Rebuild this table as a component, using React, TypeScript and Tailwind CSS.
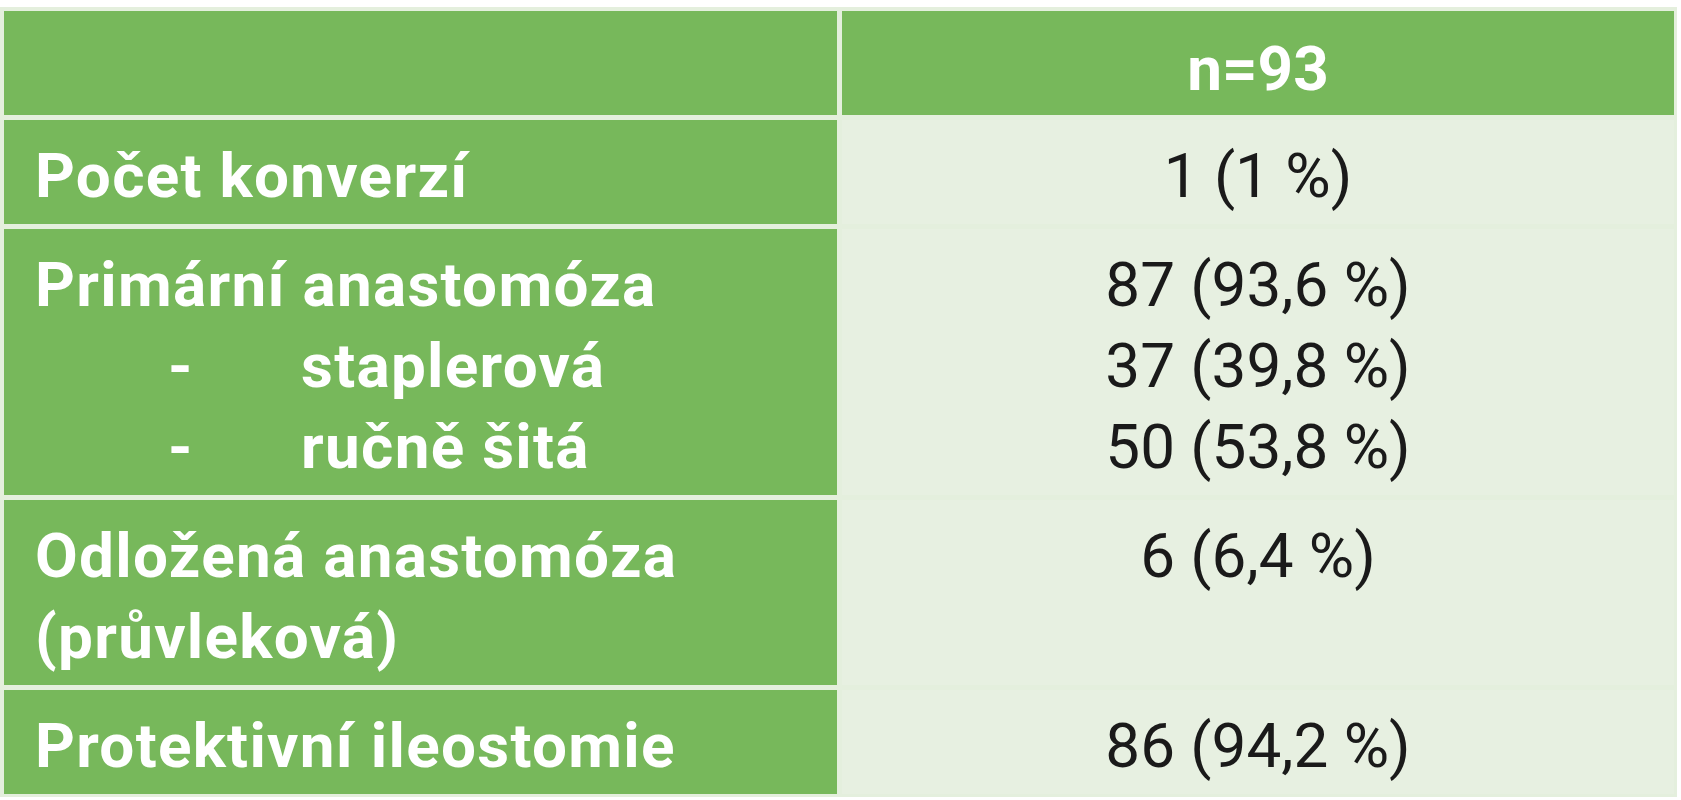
import React from "react";

// one row of the summary table: label on the left (green), value on the right
interface RowProps {
  label: React.ReactNode;
  value: React.ReactNode;
}

const Row: React.FC<RowProps> = ({ label, value }) => {
  return (
    <>
      <div className="bg-[#77b85b] text-white font-bold tracking-[1.3px] pl-[31px] pt-[15px] pb-[8px]">
        {label}
      </div>
      <div className="bg-[#e7f0e1] text-[#1a1a1a] text-center pt-[15px] pb-[8px]">
        {value}
      </div>
    </>
  );
};

const SubItem: React.FC<{ text: string }> = ({ text }) => (
  <div className="flex pl-[133px]">
    <span className="w-[133px]">-</span>
    <span>{text}</span>
  </div>
);

const App: React.FC = () => {
  return (
    <div
      className="w-[1681px] h-[800px] bg-white pt-[7px]"
      style={{ fontFamily: "Roboto, 'Liberation Sans', sans-serif" }}
    >
      <div className="w-[1677px] bg-[#e4efdd] pl-[4px] pr-[3px] pt-[4px] pb-[3px]">
        <div className="grid grid-cols-[833px_832px] gap-x-[5px] gap-y-[5px] text-[62px] leading-[81px]">
          <div className="bg-[#77b85b] pt-[15px] pb-[8px]">&nbsp;</div>
          <div className="bg-[#77b85b] text-white font-bold text-center pt-[17px] pb-[6px]">
            n=93
          </div>

          <Row label="Počet konverzí" value="1 (1 %)" />

          <Row
            label={
              <>
                <div>Primární anastomóza</div>
                <SubItem text="staplerová" />
                <SubItem text="ručně šitá" />
              </>
            }
            value={
              <>
                <div>87 (93,6 %)</div>
                <div>37 (39,8 %)</div>
                <div>50 (53,8 %)</div>
              </>
            }
          />

          <Row
            label={
              <>
                <div>Odložená anastomóza</div>
                <div>(průvleková)</div>
              </>
            }
            value="6 (6,4 %)"
          />

          <Row label="Protektivní ileostomie" value="86 (94,2 %)" />
        </div>
      </div>
    </div>
  );
};

export default App;
